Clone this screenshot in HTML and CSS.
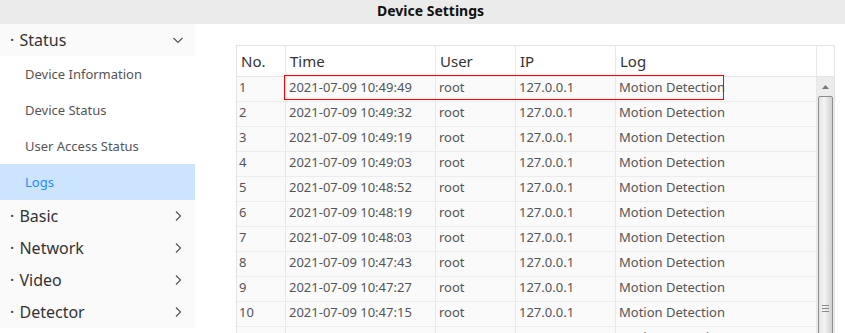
FILE: index.html
```html
<!DOCTYPE html>
<html lang="en">
<head>
  <meta charset="UTF-8">
  <title>Device Settings</title>
  <link rel="stylesheet" href="styles.css">
</head>
<body>
  <div class="topbar">Device Settings</div>
  <div class="layout">
    <!-- menu on the left -->
    <div class="sidebar">
      <div class="group open">
        <div class="group-title">· Status
          <svg class="chev" width="12" height="12" viewBox="0 0 12 12"><path d="M1.5 4 L6 8.5 L10.5 4" fill="none" stroke="#555" stroke-width="1.2"/></svg>
        </div>
        <div class="sub">Device Information</div>
        <div class="sub">Device Status</div>
        <div class="sub">User Access Status</div>
        <div class="sub active">Logs</div>
      </div>
      <div class="group">
        <div class="group-title">· Basic
          <svg class="chev" width="12" height="12" viewBox="0 0 12 12"><path d="M4 1.5 L8.5 6 L4 10.5" fill="none" stroke="#555" stroke-width="1.2"/></svg>
        </div>
      </div>
      <div class="group">
        <div class="group-title">· Network
          <svg class="chev" width="12" height="12" viewBox="0 0 12 12"><path d="M4 1.5 L8.5 6 L4 10.5" fill="none" stroke="#555" stroke-width="1.2"/></svg>
        </div>
      </div>
      <div class="group">
        <div class="group-title">· Video
          <svg class="chev" width="12" height="12" viewBox="0 0 12 12"><path d="M4 1.5 L8.5 6 L4 10.5" fill="none" stroke="#555" stroke-width="1.2"/></svg>
        </div>
      </div>
      <div class="group">
        <div class="group-title">· Detector
          <svg class="chev" width="12" height="12" viewBox="0 0 12 12"><path d="M4 1.5 L8.5 6 L4 10.5" fill="none" stroke="#555" stroke-width="1.2"/></svg>
        </div>
      </div>
    </div>

    <!-- log table -->
    <div class="content">
      <div class="grid">
        <div class="grid-head">
          <div class="cell c-no">No.</div>
          <div class="cell c-time">Time</div>
          <div class="cell c-user">User</div>
          <div class="cell c-ip">IP</div>
          <div class="cell c-log">Log</div>
          <div class="cell c-sb"></div>
        </div>
        <div class="grid-body">
          <div class="rows" id="rows"></div>
          <div class="scrollbar">
            <div class="sb-up">
              <svg width="7" height="4" viewBox="0 0 7 4"><path d="M0 4 L3.5 0 L7 4 Z" fill="#777"/></svg>
            </div>
            <div class="sb-thumb">
              <div class="grip"></div>
            </div>
          </div>
        </div>
      </div>
      <div class="highlight"></div>
    </div>
  </div>

  <script>
    // log entries
    var times = [
      "10:49:49", "10:49:32", "10:49:19", "10:49:03", "10:48:52",
      "10:48:19", "10:48:03", "10:47:43", "10:47:27", "10:47:15", "10:47:03"
    ];
    var html = "";
    for (var i = 0; i < times.length; i++) {
      html += '<div class="row">' +
        '<div class="cell c-no">' + (i + 1) + '</div>' +
        '<div class="cell c-time">2021-07-09 ' + times[i] + '</div>' +
        '<div class="cell c-user">root</div>' +
        '<div class="cell c-ip">127.0.0.1</div>' +
        '<div class="cell c-log">Motion Detection</div>' +
        '</div>';
    }
    document.getElementById("rows").innerHTML = html;
  </script>
</body>
</html>
```
FILE: styles.css
```css
* { box-sizing: border-box; }
html, body {
  margin: 0;
  height: 333px;
  overflow: hidden;
}
body {
  font-family: "Noto Sans", "Open Sans", sans-serif;
  background: #fff;
  color: #333;
}
.topbar {
  height: 24px;
  line-height: 22px;
  background: #ebebeb;
  text-align: center;
  font-weight: 700;
  font-size: 14px;
  color: #111;
  padding-left: 16px;
}
.layout {
  display: flex;
  height: 309px;
}
/* Menu */
.sidebar {
  width: 195px;
  flex: none;
}
.group-title {
  height: 32px;
  display: flex;
  align-items: center;
  padding-left: 10px;
  padding-right: 11px;
  font-size: 16px;
  color: #333;
  background: #fafafa;
  word-spacing: 1px;
}
.chev {
  margin-left: auto;
}
.sub {
  height: 36px;
  line-height: 36px;
  padding-left: 25px;
  font-size: 13px;
  color: #555;
  background: #fff;
}
.sub.active {
  background: #cce4fe;
  color: #1a8cff;
}
/* Table */
.content {
  position: relative;
  flex: 1;
  padding: 21px 0 0 41px;
  overflow: hidden;
}
.grid {
  width: 599px;
  border: 1px solid #e2e2e2;
  border-bottom: none;
}
.grid-head, .row {
  display: flex;
}
.grid-head {
  height: 31px;
  border-bottom: 1px solid #e6e6e6;
}
.grid-head .cell {
  font-size: 15px;
  color: #333;
  line-height: 31px;
  padding-left: 4px;
}
.cell {
  border-right: 1px solid #e8e8e8;
  flex: none;
  white-space: nowrap;
  overflow: hidden;
}
.c-no { width: 49px; }
.c-time { width: 150px; }
.c-user { width: 80px; }
.c-ip { width: 100px; }
.c-log { width: 201px; }
.c-sb { width: 17px; border-right: none; }
.grid-body {
  display: flex;
}
.rows {
  width: 580px;
  background: #fafafa;
}
.row {
  height: 25px;
  border-bottom: 1px solid #ececec;
}
.row .cell {
  font-size: 13px;
  color: #555;
  line-height: 21px;
  padding-left: 3px;
}
.row .c-no { padding-left: 2px; }
.scrollbar {
  width: 17px;
  background: #ececec;
  padding: 1px 1px 0 1px;
}
.sb-up {
  height: 17px;
  display: flex;
  align-items: center;
  justify-content: center;
}
.sb-thumb {
  height: 260px;
  margin-top: 1px;
  border: 1px solid #8d8d8d;
  border-radius: 2px;
  background: linear-gradient(to right, #e2e2e2, #f4f4f4 40%, #d0d0d0);
  display: flex;
  justify-content: center;
  padding-top: 208px;
}
.grip {
  width: 7px;
  height: 8px;
  background: repeating-linear-gradient(to bottom, #8a8a8a 0 1px, transparent 1px 3px);
}
.highlight {
  position: absolute;
  z-index: 1;
  left: 89px;
  top: 51px;
  width: 440px;
  height: 25px;
  border: 1px solid #ff0000;
}
```
